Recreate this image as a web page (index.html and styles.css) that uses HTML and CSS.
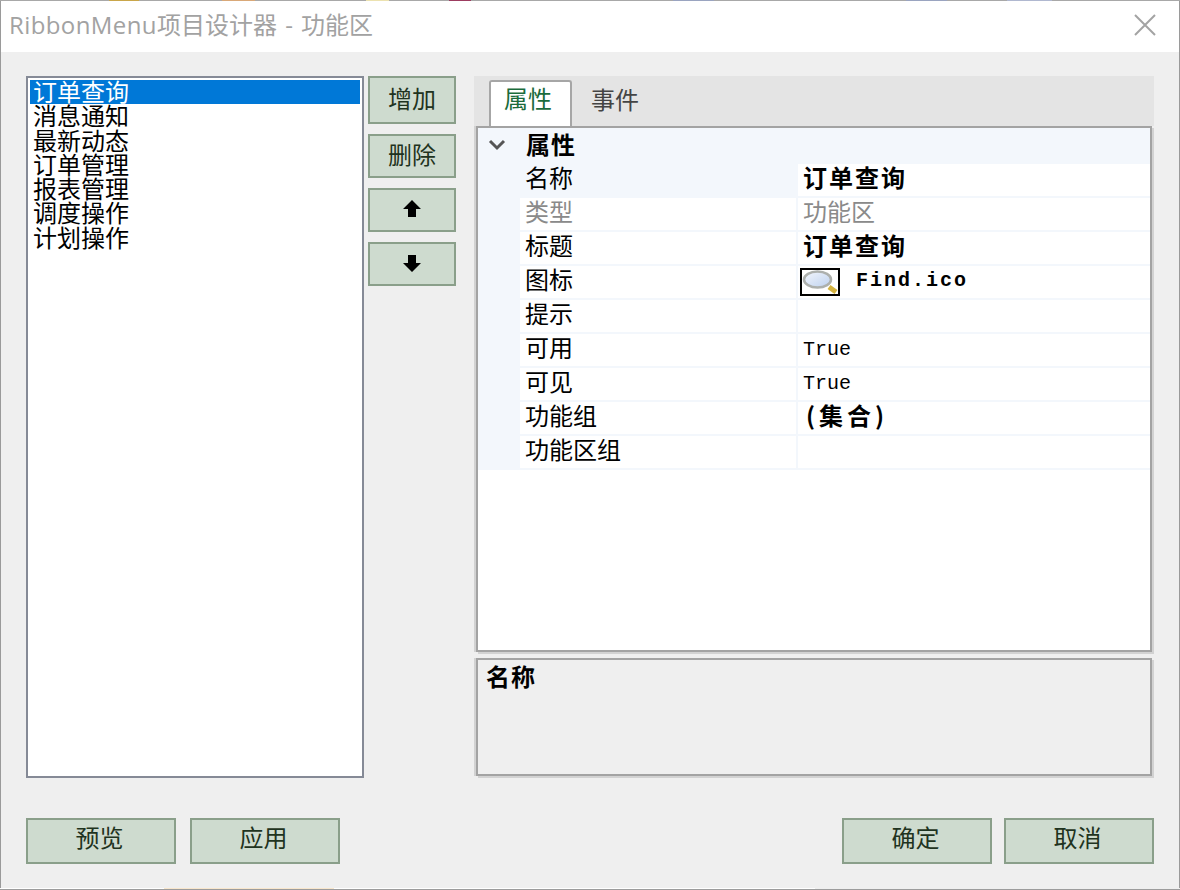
FILE: index.html
```html
<!DOCTYPE html>
<html lang="zh-CN">
<head>
<meta charset="utf-8">
<title>RibbonMenu项目设计器 - 功能区</title>
<link rel="stylesheet" href="styles.css">
</head>
<body>
<div class="window">
  <header class="titlebar">
    <span class="title"><span class="latin">RibbonMenu</span>项目设计器 - 功能区</span>
    <svg class="close" width="22" height="22" viewBox="0 0 22 22"><path d="M1 1 21 21M21 1 1 21" stroke="#a3a3a3" stroke-width="2" fill="none"/></svg>
  </header>
  <main class="content">
    <section class="left">
      <ul class="list">
        <li class="item selected">订单查询</li>
        <li class="item">消息通知</li>
        <li class="item">最新动态</li>
        <li class="item">订单管理</li>
        <li class="item">报表管理</li>
        <li class="item">调度操作</li>
        <li class="item">计划操作</li>
      </ul>
      <div class="side-buttons">
        <button class="btn side tall">增加</button>
        <button class="btn side">删除</button>
        <button class="btn side"><svg class="arrow" width="20" height="20" viewBox="0 0 20 20"><path d="M10 1 19 10H14V18H6V10H1Z" fill="#000"/></svg></button>
        <button class="btn side"><svg class="arrow" width="20" height="20" viewBox="0 0 20 20"><path d="M10 19 19 10H14V2H6V10H1Z" fill="#000"/></svg></button>
      </div>
    </section>
    <section class="right">
      <div class="tabstrip">
        <div class="tab active">属性</div>
        <div class="tab">事件</div>
      </div>
      <div class="grid">
        <div class="cat">
          <span class="gutter chevron"><svg width="18" height="12" viewBox="0 0 18 12"><path d="M2 2 9 9 16 2" stroke="#555" stroke-width="3" fill="none"/></svg></span>
          <span class="cat-name">属性</span>
        </div>
        <div class="row sel"><span class="gutter"></span><span class="label">名称</span><span class="value bold">订单查询</span></div>
        <div class="row"><span class="gutter"></span><span class="label muted">类型</span><span class="value muted">功能区</span></div>
        <div class="row"><span class="gutter"></span><span class="label">标题</span><span class="value bold">订单查询</span></div>
        <div class="row"><span class="gutter"></span><span class="label">图标</span>
          <span class="value icon-value">
            <svg class="thumb" width="40" height="28" viewBox="0 0 40 28">
              <defs>
                <linearGradient id="lens" x1="0" y1="0" x2="1" y2="1">
                  <stop offset="0" stop-color="#f4f7fd"/>
                  <stop offset="1" stop-color="#bcd0ee"/>
                </linearGradient>
              </defs>
              <rect x="1" y="1" width="38" height="26" fill="#fff" stroke="#000" stroke-width="2"/>
              <ellipse cx="17.500" cy="11.500" rx="13.500" ry="8" fill="url(#lens)" stroke="#adb0ad" stroke-width="2.500"/>
              <path d="M29 19 36 24" stroke="#d3b23f" stroke-width="5"/>
            </svg>
            <span class="mono strong">Find.ico</span>
          </span>
        </div>
        <div class="row"><span class="gutter"></span><span class="label">提示</span><span class="value"></span></div>
        <div class="row"><span class="gutter"></span><span class="label">可用</span><span class="value mono">True</span></div>
        <div class="row"><span class="gutter"></span><span class="label">可见</span><span class="value mono">True</span></div>
        <div class="row"><span class="gutter"></span><span class="label">功能组</span><span class="value bold paren">(集合)</span></div>
        <div class="row"><span class="gutter"></span><span class="label">功能区组</span><span class="value"></span></div>
      </div>
      <div class="desc"><strong class="desc-title">名称</strong></div>
    </section>
  </main>
  <footer class="footer">
    <div class="group">
      <button class="btn wide">预览</button>
      <button class="btn wide">应用</button>
    </div>
    <div class="group narrow">
      <button class="btn wide">确定</button>
      <button class="btn wide">取消</button>
    </div>
  </footer>
</div>
</body>
</html>
```
FILE: styles.css
```css
* { box-sizing: border-box; }
html, body { margin: 0; height: 100%; }
body {
  width: 1180px;
  height: 890px;
  overflow: hidden;
  background-color: #9c9c9c;
  background-image:
    linear-gradient(90deg, #a8a8a8 109px, #c9a64a 109px, #c9a64a 139px, #a8a8a8 139px, #a8a8a8 222px, #d9a878 222px, #d9a878 255px, #a8a8a8 255px, #a8a8a8 366px, #ece2b0 366px, #ece2b0 389px, #a8a8a8 389px, #a8a8a8 449px, #9c3c60 449px, #9c3c60 471px, #a8a8a8 471px, #a8a8a8 673px, #9aa4c0 673px, #9aa4c0 714px, #a8a8a8 714px, #a8a8a8 906px, #9aa4c0 906px, #9aa4c0 947px, #a8a8a8 947px, #a8a8a8 1007px, #b0b8d0 1007px, #b0b8d0 1052px, #a8a8a8 1052px),
    linear-gradient(90deg, #fff 164px, #f8e6cc 164px, #f8e6cc 334px, #fff 334px, #fff 815px, #efefef 815px);
  background-repeat: no-repeat;
  background-size: 100% 1px, 100% 1px;
  background-position: 0 0, 0 888px;
  font-family: "Noto Sans CJK SC", "Noto Sans", sans-serif;
  font-size: 24px;
  color: #000;
}
.window {
  width: 1180px;
  height: 887px;
  margin-top: 1px;
  background: #efefef;
  border-left: 1px solid #9a9a9a;
  border-right: 1px solid #9a9a9a;
  display: flex;
  flex-direction: column;
}
.titlebar {
  height: 51px;
  flex: none;
  background: #fff;
  display: flex;
  align-items: center;
  justify-content: space-between;
  padding: 0 23px 3px 8px;
}
.title {
  font-family: "Open Sans", "Noto Sans CJK SC", sans-serif;
  font-size: 24px;
  line-height: 32px;
  color: #a2a2a2;
  white-space: nowrap;
  word-spacing: 2px;
}
.latin { letter-spacing: 0.400px; }
.content {
  flex: none;
  height: 702px;
  margin-top: 24px;
  padding-left: 25px;
  display: flex;
}
.left { display: flex; width: 430px; flex: none; }
.list {
  list-style: none;
  margin: 0;
  padding: 2px;
  width: 338px;
  height: 702px;
  flex: none;
  background: #fff;
  border: 2px solid #858a96;
}
.item {
  height: 24.300px;
  line-height: 22px;
  padding-left: 3px;
  white-space: nowrap;
}
.item.selected { background: #0078d7; color: #fff; }
.side-buttons {
  margin-left: 4px;
  width: 88px;
  display: flex;
  flex-direction: column;
  gap: 10px;
}
.btn {
  font-family: "Noto Sans CJK SC", sans-serif;
  font-size: 24px;
  color: #1f3320;
  background: #cedbcf;
  border: 2px solid #8a9f8a;
  padding: 0;
  display: flex;
  align-items: center;
  justify-content: center;
  line-height: 1;
}
.side { height: 44px; width: 88px; padding-bottom: 4px; }
.side.tall { height: 48px; }
.arrow { margin-top: 2px; }
.wide { width: 150px; height: 46px; padding: 0 3px 8px 0; }
.right {
  margin-left: 18px;
  width: 680px;
  flex: none;
  display: flex;
  flex-direction: column;
}
.tabstrip {
  height: 50px;
  flex: none;
  background: #e4e4e4;
  padding: 4px 0 0 15px;
  display: flex;
  align-items: flex-start;
  position: relative;
  z-index: 1;
}
.tab {
  width: 83px;
  height: 46px;
  line-height: 38px;
  padding-left: 19px;
  color: #444;
  font-size: 24px;
}
.tab.active {
  background: #fff;
  color: #1a6b3c;
  border: 2px solid #a6a6a6;
  border-bottom: 0;
  border-radius: 3px 3px 0 0;
  padding-left: 13px;
  line-height: 32px;
}
.grid {
  margin: 0 2px;
  height: 526px;
  flex: none;
  background: #fff;
  border: 2px solid #a3a3a3;
  box-shadow: 2px 2px 0 #d2d2d2, -2px 0 0 #d2d2d2;
}
.cat {
  height: 36px;
  background: #f3f7fc;
  display: flex;
  align-items: center;
}
.gutter {
  width: 42px;
  flex: none;
  align-self: stretch;
  background: #f3f7fc;
  display: flex;
  align-items: center;
  justify-content: center;
}
.chevron { padding: 0 4px 2px 0; }
.cat-name {
  margin: 0 0 4px 6px;
  font-weight: 700;
  letter-spacing: 1px;
  line-height: 32px;
}
.row {
  height: 34px;
  display: flex;
  border-bottom: 2px solid #f3f7fc;
  line-height: 26px;
}
.label {
  width: 278px;
  flex: none;
  padding-left: 5px;
  border-right: 2px solid #f3f7fc;
  white-space: nowrap;
}
.row.sel .label { background: #f3f7fc; }
.value {
  flex: 1;
  padding-left: 5px;
  white-space: nowrap;
}
.bold { font-weight: 700; letter-spacing: 2px; }
.paren { padding-left: 8px; letter-spacing: 4px; }
.muted { color: #8a8a8a; }
.mono {
  font-family: "Liberation Mono", monospace;
  font-size: 20px;
  line-height: 32px;
}
.strong { font-weight: 700; letter-spacing: 2px; }
.icon-value {
  display: flex;
  align-items: center;
  gap: 16px;
  padding-left: 2px;
}
.icon-value .mono { margin-bottom: 3px; }
.thumb { flex: none; }
.desc {
  margin: 6px 2px 0;
  height: 118px;
  flex: none;
  border: 2px solid #a3a3a3;
  box-shadow: 2px 2px 0 #d2d2d2, -2px 0 0 #d2d2d2;
  padding: 0 8px;
}
.desc-title { font-weight: 700; letter-spacing: 1px; line-height: 32px; display: block; }
.footer {
  flex: none;
  margin-top: 40px;
  padding: 0 25px;
  display: flex;
  justify-content: space-between;
}
.group { display: flex; gap: 14px; }
.group.narrow { gap: 12px; }
```
